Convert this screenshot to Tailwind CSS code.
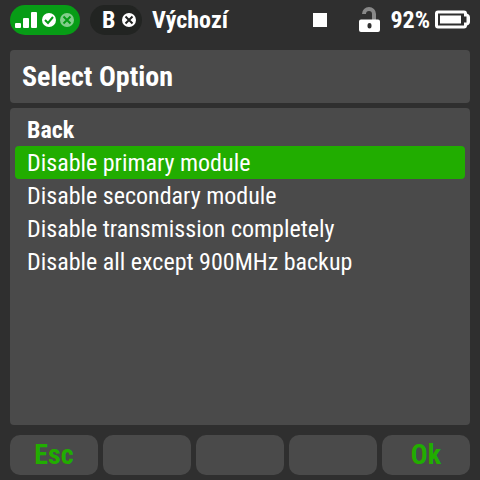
<!DOCTYPE html>
<html lang="cs">

<head>
    <meta charset="UTF-8">
    <title>Select Option</title>
    <meta name="viewport" content="width=device-width, initial-scale=1.0">
    <script src="https://cdn.jsdelivr.net/npm/@tailwindcss/browser@4"></script>
</head>

<body class="bg-[#2f2f2f] text-white font-['Roboto_Condensed','Roboto',sans-serif]">
    <div class="flex flex-col min-h-screen px-[10px] pt-[5px] pb-[5px]">
        <!-- Status bar -->
        <header class="flex items-center h-[30px] mb-[15px] text-2xl font-bold whitespace-nowrap">
            <div class="flex items-center w-[70px] h-[30px] rounded-full bg-[#079c16]">
                <svg class="w-[70px] h-[30px]" viewBox="0 0 70 30" fill="none">
                    <g fill="#fff">
                        <rect x="5" y="18" width="6" height="5" rx="1" />
                        <rect x="13" y="13" width="6" height="10" rx="1" />
                        <rect x="21" y="7" width="6" height="16" rx="1" />
                        <circle cx="39" cy="15" r="7" />
                        <circle cx="57" cy="15" r="7" opacity=".5" />
                    </g>
                    <path d="M35 15l3 3 5-6" stroke="#079c16" stroke-width="2" />
                    <path d="M53.500 11.500l7 7m0-7l-7 7" stroke="#079c16" stroke-width="2" />
                </svg>
            </div>
            <div class="flex items-center gap-[7px] w-[52px] h-[30px] ml-[10px] pl-3 rounded-full bg-[#222422]">
                <span>B</span>
                <svg class="w-[14px] h-[14px] shrink-0" viewBox="0 0 14 14" fill="none">
                    <circle cx="7" cy="7" r="7" fill="#fff" />
                    <path d="M3.500 3.500l7 7m0-7l-7 7" stroke="#222422" stroke-width="2" />
                </svg>
            </div>
            <span class="ml-[10px]">Výchozí</span>
            <div class="flex items-center ml-auto">
                <div class="w-[14px] h-[14px] mr-8 bg-white"></div>
                <svg class="w-[21px] h-[24px] mr-[10px] overflow-visible" viewBox="0 0 21 24" fill="none">
                    <path d="M5 6a5 5 0 0 1 10 0v6" stroke="#888" stroke-width="4" />
                    <path fill="#fff" fill-rule="evenodd"
                        d="M2 11.500h17a2 2 0 0 1 2 2V22a2 2 0 0 1-2 2H2a2 2 0 0 1-2-2v-8.500a2 2 0 0 1 2-2zM10.500 15a2 2 0 0 0-2 2v1.500a2 2 0 0 0 4 0V17a2 2 0 0 0-2-2z" />
                </svg>
                <span>92%</span>
                <svg class="w-[35px] h-[20px] ml-[5px]" viewBox="0 0 35 20">
                    <path d="M3 .5h26q3 0 3 3 3 1 3 4v4q0 3-3 4 0 3-3 3H3q-3 0-3-3v-12q0-3 3-3z" fill="#fff" />
                    <path d="M3 3.500h26v3h2.500v6H29v3H3z" fill="#2f2f2f" />
                    <rect x="5" y="5.500" width="21" height="8" fill="#fff" />
                </svg>
            </div>
        </header>

        <!-- Title -->
        <h1 class="flex items-center h-[53px] mb-[5px] px-3 rounded bg-[#4a4a4a] text-[28px] font-bold">Select Option</h1>

        <!-- Options -->
        <ul class="grow mb-[10px] p-[5px] rounded bg-[#4a4a4a] text-2xl leading-[31px]">
            <li><button type="button" class="block w-full px-3 pt-[2px] text-left font-bold">Back</button></li>
            <li><button type="button" class="block w-full px-3 pt-[2px] rounded bg-[#21ad00] text-left">Disable primary module</button></li>
            <li><button type="button" class="block w-full px-3 pt-[2px] text-left">Disable secondary module</button></li>
            <li><button type="button" class="block w-full px-3 pt-[2px] text-left">Disable transmission completely</button></li>
            <li><button type="button" class="block w-full px-3 pt-[2px] text-left">Disable all except 900MHz backup</button></li>
        </ul>

        <!-- Soft keys -->
        <nav class="grid grid-cols-5 gap-[5px] text-[28px] leading-[40px] font-bold text-[#21ad00]">
            <button type="button" class="h-[40px] rounded-[10px] bg-[#4a4a4a]">Esc</button>
            <button type="button" class="h-[40px] rounded-[10px] bg-[#4a4a4a]"></button>
            <button type="button" class="h-[40px] rounded-[10px] bg-[#4a4a4a]"></button>
            <button type="button" class="h-[40px] rounded-[10px] bg-[#4a4a4a]"></button>
            <button type="button" class="h-[40px] rounded-[10px] bg-[#4a4a4a]">Ok</button>
        </nav>
    </div>
</body>

</html>
